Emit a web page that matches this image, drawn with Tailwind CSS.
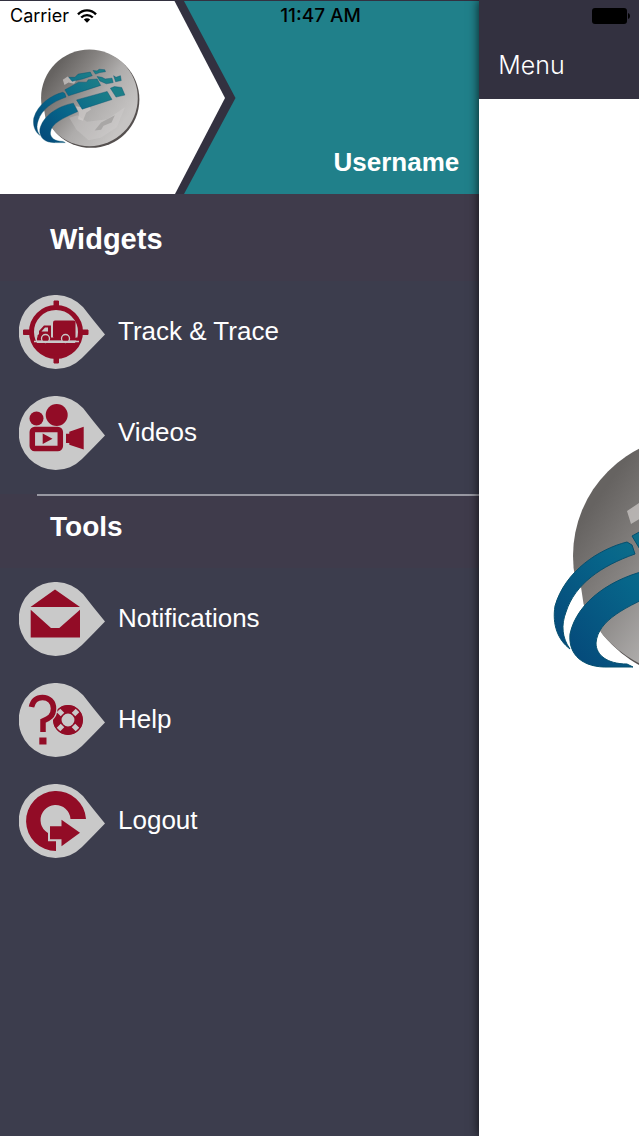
<!DOCTYPE html>
<html lang="en">
<head>
    <meta charset="UTF-8">
    <meta name="viewport" content="width=device-width, initial-scale=1.0">
    <title>Menu</title>
    <script src="https://cdn.jsdelivr.net/npm/@tailwindcss/browser@4"></script>
</head>
<body class="relative flex min-h-screen bg-white font-['Liberation_Sans',sans-serif]">

    <!-- shared shapes -->
    <svg class="absolute size-0" aria-hidden="true">
        <defs>
            <linearGradient id="sphere" gradientUnits="userSpaceOnUse" x1="40" y1="70" x2="215" y2="195">
                <stop offset="0" stop-color="#666361"/>
                <stop offset="0.3" stop-color="#868381"/>
                <stop offset="0.6" stop-color="#aeacab"/>
                <stop offset="1" stop-color="#c6c4c3"/>
            </linearGradient>
            <linearGradient id="band" gradientUnits="userSpaceOnUse" x1="10" y1="215" x2="170" y2="80">
                <stop offset="0" stop-color="#05497a"/>
                <stop offset="0.45" stop-color="#07668a"/>
                <stop offset="1" stop-color="#1c7f88"/>
            </linearGradient>
            <symbol id="globe" viewBox="0 0 268 250">
                <circle cx="144" cy="125" r="120" fill="#55504f"/>
                <circle cx="140" cy="121" r="120" fill="url(#sphere)"/>
                <path d="M74 76l12-8 8 6 14 2-6 10-14-3-10 6zM106 142l24 4 6-10 8 14-12 8-8 20-12-4 2-16z" fill="#d0cccb" opacity=".7"/>
                <path d="M90 170l20-6 24 16 50-6 44-30-20 50-40 26-30 6-30-26z" fill="#d8d5d4" opacity=".3"/>
                <path d="M153 202l16-20 34-18-8 18-20 8-6 10z" fill="#a9a7a6"/>
                <path d="M13 178C16 164 22 157 28 152L31 172C24 180 19 190 17 200L17 212C11 203 9 190 13 178zM47 196C40 205 42 218 56 224L80 228C68 222 56 211 47 196z" fill="#fff"/>
                <g fill="url(#band)" stroke="#06506f" stroke-width="1">
                    <path d="M74 107C46 114 12 136 2 171C-1 190 5 205 17 214C9 203 8 190 13 177C22 149 48 131 82 119L79 110z"/>
                    <path d="M100 134C60 142 24 166 17 199C15 220 30 233 56 232H80L74 229C54 229 43 220 43 208C45 185 72 172 111 155z"/>
                    <path d="M108 126l76-21 12 20-74 24zM192 97l10-4 18 2 8 19-22 5z"/>
                    <path d="M79 101l20-11 14-8 20 0 4-6 22-2 9 16-40 13-40 13z"/>
                    <path d="M89 70l15 0 8-8 30-5 5 9-24 8-26 6zM149 53l10 1 5-4 14 1 2 5-14 2-11 4z"/>
                    <path d="M159 68l12 2 8 4 17-2 3 11-17 3-16-7zM200 66l6 4 11-4 2 12-14 3z"/>
                </g>
            </symbol>
            <path id="drop" d="M64 12A37 37 0 1 0 63 63Q73 53 86 39.500Q74 25 64 12z" fill="#c9c9c9"/>
        </defs>
    </svg>

    <!-- status bar -->
    <div class="absolute inset-x-0 top-0 z-20 grid h-8 grid-cols-3 items-center pr-2 pl-[10px] font-['Inter',sans-serif] text-lg text-black">
        <div class="flex items-center gap-2">
            <span>Carrier</span>
            <svg class="h-[14px] w-5" viewBox="0 0 20 14" fill="none" stroke="#000" stroke-width="2.400" aria-hidden="true">
                <path d="M1 5.300C6 .1 14 .1 19 5.300M4.200 8.500C7.500 5.300 12.500 5.300 15.800 8.500"/>
                <path d="M10 13.800L6.800 10.600Q10 8 13.200 10.600z" fill="#000" stroke="none"/>
            </svg>
        </div>
        <time class="text-center text-[19px] font-medium">11:47 AM</time>
        <svg class="h-4 w-[39px] justify-self-end" viewBox="0 0 39 16" aria-label="Battery full">
            <rect width="35" height="16" rx="3"/>
            <path d="M36 5q2 .5 2 3t-2 3z"/>
        </svg>
    </div>

    <!-- drawer -->
    <aside class="w-3/4 shrink-0 bg-[#3c3d4d] text-white">
        <header class="flex h-[194px] items-end justify-between border-t border-[#333140] bg-[#20808a]">
            <div class="relative flex h-full w-[236px] items-center pt-1">
                <svg class="absolute inset-0 size-full" viewBox="0 0 236 193" preserveAspectRatio="none" aria-hidden="true">
                    <path d="M0 0H184L235.500 97L184 193H0z" fill="#333140"/>
                    <path d="M0 0H174.500L225 97L175 193H0z" fill="#fff"/>
                </svg>
                <svg class="relative ml-[33px] h-[101px] w-[108px]" role="img" aria-label="Company logo"><use href="#globe"/></svg>
            </div>
            <p class="pr-5 pb-4 text-[26px] leading-8 font-bold">Username</p>
        </header>

        <nav>
            <h2 class="h-[87px] bg-[#3f3b4b] pt-[27px] pl-[50px] text-[29px] leading-9 font-bold">Widgets</h2>
            <ul class="pb-[11px] text-[26px]">
                <li>
                    <a href="#track" class="flex h-[101px] items-center gap-3 pl-[19px]">
                        <svg class="h-[74px] w-[87px]" viewBox="0 0 87 74" fill="#920c26" aria-hidden="true">
                            <use href="#drop"/>
                            <circle cx="37" cy="37" r="24.500" fill="none" stroke="#920c26" stroke-width="5"/>
                            <path d="M35 6h4.500v6H35zM35 62h4.500v6H35zM4.500 35H11v4.500H4.500zM63 35h6v4.500h-6z" stroke="#920c26" stroke-width="1" stroke-linejoin="round"/>
                            <path d="M16 48H58C54 56 46 60 37 60S20 56 16 48z"/>
                            <rect x="34" y="25.500" width="22.500" height="18" rx="2"/>
                            <path d="M32 30.500V44H18.500V40.500L20 39V36L25 30.500z"/>
                            <path d="M29 32.500V36.500H22.500L26 32.500z" fill="#c9c9c9"/>
                            <path d="M18 42.500H58V45.500H18z"/>
                            <g stroke="#c9c9c9" stroke-width="1.300">
                                <circle cx="26.500" cy="43.500" r="4"/>
                                <circle cx="46.500" cy="43.500" r="4"/>
                            </g>
                            <path d="M15 46.500H60" stroke="#c9c9c9" stroke-width="1.500"/>
                        </svg>
                        Track &amp; Trace
                    </a>
                </li>
                <li>
                    <a href="#videos" class="flex h-[101px] items-center gap-3 pl-[19px]">
                        <svg class="h-[74px] w-[87px]" viewBox="0 0 87 74" fill="#920c26" aria-hidden="true">
                            <use href="#drop"/>
                            <circle cx="17.500" cy="22.500" r="7"/>
                            <circle cx="37.700" cy="19" r="11"/>
                            <rect x="13.300" y="33.500" width="28" height="19" rx="2.500" fill="none" stroke="#920c26" stroke-width="5.500"/>
                            <path d="M23.700 37.500L33.500 42.700L23.700 48zM47 37.700H50.300V35.700L64.700 30.700V53.500L50.300 48.700V47H47z"/>
                        </svg>
                        Videos
                    </a>
                </li>
            </ul>

            <h2 class="relative h-[74px] bg-[#3f3b4b] pt-[15px] pl-[50px] text-[28px] leading-9 font-bold before:absolute before:top-0 before:right-0 before:left-[37px] before:h-[2px] before:bg-[#9898a2]">Tools</h2>
            <ul class="text-[26px]">
                <li>
                    <a href="#notifications" class="flex h-[101px] items-center gap-3 pl-[19px]">
                        <svg class="h-[74px] w-[87px]" viewBox="0 0 87 74" fill="#920c26" aria-hidden="true">
                            <use href="#drop"/>
                            <path d="M36 7.500L61 25H11.500zM11.700 27.700L32 46H40.300L61 27.700V55.500H11.700z"/>
                        </svg>
                        Notifications
                    </a>
                </li>
                <li>
                    <a href="#help" class="flex h-[101px] items-center gap-3 pl-[19px]">
                        <svg class="h-[74px] w-[87px]" viewBox="0 0 87 74" fill="none" aria-hidden="true">
                            <use href="#drop"/>
                            <circle cx="49" cy="37" r="10.700" stroke="#920c26" stroke-width="8.500"/>
                            <path d="M43.500 31.500L39.500 27.500M54.500 31.500L58.500 27.500M43.500 42.500L39.500 46.500M54.500 42.500L58.500 46.500" stroke="#c9c9c9" stroke-width="5"/>
                            <circle cx="49" cy="37" r="14.500" stroke="#920c26" stroke-width="1"/>
                            <path d="M12.500 24C14 17 18 14.500 23.500 14.500C30 14.500 34.500 19 34.500 25.500C34.500 33 30 35.500 24 38V49" stroke="#c9c9c9" stroke-width="8"/>
                            <path d="M12.500 24C14 17 18 14.500 23.500 14.500C30 14.500 34.500 19 34.500 25.500C34.500 33 30 35.500 24 38V49" stroke="#920c26" stroke-width="5.500"/>
                            <path d="M20.300 54.500H27.500V61.500H20.300z" fill="#920c26"/>
                        </svg>
                        Help
                    </a>
                </li>
                <li>
                    <a href="#logout" class="flex h-[101px] items-center gap-3 pl-[19px]">
                        <svg class="h-[74px] w-[87px]" viewBox="0 0 87 74" fill="#920c26" aria-hidden="true">
                            <use href="#drop"/>
                            <path d="M67 35A30 30 0 1 0 37 67V51A15 15 0 1 1 51.500 35z"/>
                            <path d="M31 42.300H42.500V35.700L61 48.700L42.500 62.300V55.300H31z" stroke="#c9c9c9" stroke-width="4" paint-order="stroke"/>
                        </svg>
                        Logout
                    </a>
                </li>
            </ul>
        </nav>
    </aside>

    <!-- page pushed aside by the drawer -->
    <main class="z-10 flex min-w-0 flex-1 flex-col overflow-hidden bg-white shadow-[0_0_10px_rgba(0,0,0,0.8)]">
        <div class="h-[99px] bg-[#333140] pt-[49px] pl-[19px]">
            <h1 class="font-['Inter',sans-serif] text-[25px] leading-8 font-light text-white">Menu</h1>
        </div>
        <div class="flex grow items-center pb-[116px] pl-[74px]">
            <svg class="h-[250px] w-[268px] shrink-0" role="img" aria-label="Company logo"><use href="#globe"/></svg>
        </div>
    </main>
</body>
</html>
